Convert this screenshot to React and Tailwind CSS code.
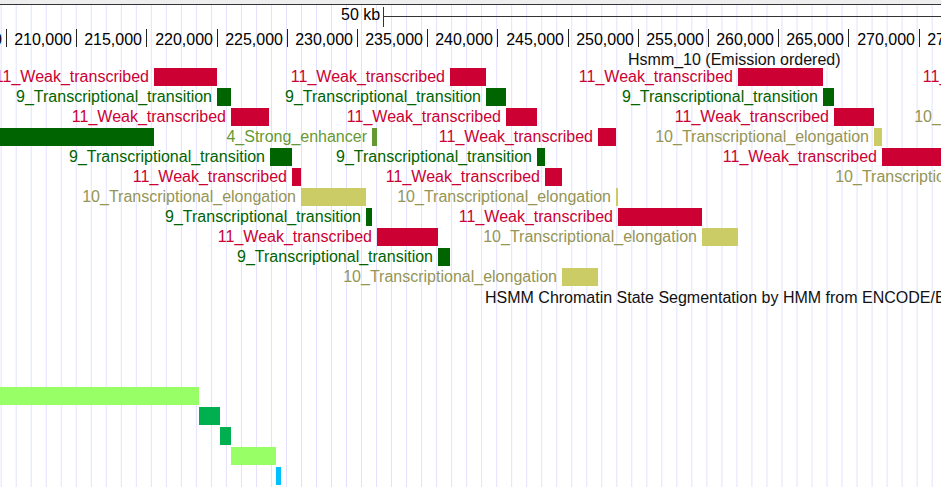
import React from 'react';

// item types: bar colour + label colour + label text
const TYPES = {
    wt: { bar: 'bg-[#cc0033]', text: 'text-[#cc0033]', label: '11_Weak_transcribed' },
    tt: { bar: 'bg-[#006400]', text: 'text-[#006400]', label: '9_Transcriptional_transition' },
    te: { bar: 'bg-[#cccc66]', text: 'text-[#959555]', label: '10_Transcriptional_elongation' },
    se: { bar: 'bg-[#669933]', text: 'text-[#669933]', label: '4_Strong_enhancer' },
    lg: { bar: 'bg-[#99ff66]', text: '', label: null },
    g: { bar: 'bg-[#00b050]', text: '', label: null },
    c: { bar: 'bg-[#00c0ff]', text: '', label: null },
};

const hsmmRows = [
    [[154, 217, 'wt'], [450, 486, 'wt'], [738, 823, 'wt'], [1082, 1200, 'wt']],
    [[217, 231, 'tt'], [486, 506, 'tt'], [823, 834, 'tt']],
    [[231, 269, 'wt'], [506, 537, 'wt'], [834, 874, 'wt'], [1133, 1200, 'te']],
    [[-10, 154, 'tt', true], [372, 377, 'se'], [598, 616, 'wt'], [874, 882, 'te']],
    [[270, 292, 'tt'], [537, 545, 'tt'], [882, 1000, 'wt']],
    [[292, 301, 'wt'], [545, 562, 'wt'], [1054, 1200, 'te']],
    [[301, 366, 'te'], [616, 618, 'te']],
    [[366, 372, 'tt'], [618, 702, 'wt']],
    [[377, 438, 'wt'], [702, 738, 'te']],
    [[438, 450, 'tt']],
    [[562, 598, 'te']],
];

const lowerRows = [
    [[0, 199, 'lg']],
    [[199, 220, 'g']],
    [[220, 231, 'g']],
    [[231, 276, 'lg']],
    [[276, 281, 'c']],
];

const ticks = Array.from({ length: 15 }, (_, k) => ({
    value: 205000 + k * 5000,
    x: Math.round(6 + k * 70.2),
}));

function Item({ start, end, type, noLabel }) {
    const t = TYPES[type];
    return (
        <div className="absolute top-0 h-[18px]" style={{ left: start, width: end - start }}>
            <div className={`h-full w-full ${t.bar}`} />
            {t.label && !noLabel && (
                <span className={`absolute right-full top-0 pr-[5px] whitespace-nowrap text-[16px] leading-[18px] ${t.text}`}>
                    {t.label}
                </span>
            )}
        </div>
    );
}

function TrackRow({ items }) {
    return (
        <div className="relative h-[20px]">
            {items.map(([s, e, type, noLabel], i) => (
                <Item key={i} start={s} end={e} type={type} noLabel={noLabel} />
            ))}
        </div>
    );
}

export default function App() {
    return (
        <div className="w-[941px] h-[487px] overflow-hidden bg-white font-['Liberation_Sans',Arial,sans-serif] text-black">
            <div className="h-[5px] bg-[#eeeeee] border-b border-[#333333]" />

            <div className="relative h-[482px] bg-[linear-gradient(90deg,#e0e0ff_1px,transparent_1px)] bg-[length:15.03px_100%] bg-[position:0.7px_0]">
                {/* scale bar */}
                <div className="flex h-[26px] items-start pl-[341px]">
                    <span className="mt-[1px] text-[16px] leading-[18px] whitespace-nowrap">50 kb</span>
                    <div className="ml-[3px] mt-[2px] h-[20px] w-[1px] bg-[#333333]" />
                    <div className="mt-[11px] h-[1px] flex-1 bg-[#333333]" />
                </div>

                {/* base position ruler */}
                <div className="relative h-[20px]">
                    {ticks.map((t) => (
                        <div key={t.value} className="absolute top-0 h-[17px]" style={{ left: t.x }}>
                            <div className="absolute left-0 top-[-2px] h-[18px] w-[1px] bg-[#222222]" />
                            <span className="absolute right-[4px] top-[0px] text-[16px] leading-[18px] whitespace-nowrap">
                                {t.value.toLocaleString('en-US')}
                            </span>
                        </div>
                    ))}
                </div>

                <div className="h-[17px] pl-[628px] text-[16px] leading-[18px] whitespace-nowrap text-[#111111]">
                    Hsmm_10 (Emission ordered)
                </div>

                {hsmmRows.map((items, i) => (
                    <TrackRow key={i} items={items} />
                ))}

                <div className="h-[20px] pl-[485px] pt-[1px] text-[16px] leading-[18px] whitespace-nowrap text-[#111111]">
                    HSMM Chromatin State Segmentation by HMM from ENCODE/Broad
                </div>

                <div className="h-[79px]" />

                {lowerRows.map((items, i) => (
                    <TrackRow key={i} items={items} />
                ))}
            </div>
        </div>
    );
}
